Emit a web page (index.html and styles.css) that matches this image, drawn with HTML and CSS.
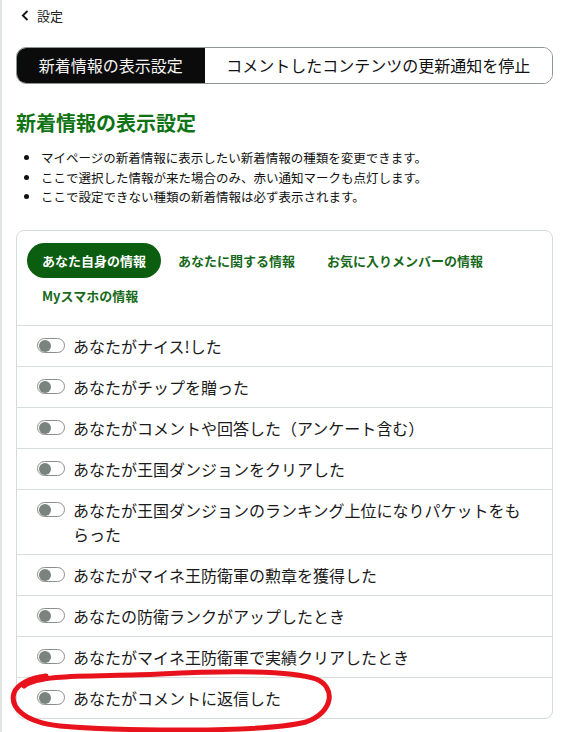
FILE: index.html
```html
<!DOCTYPE html>
<html lang="ja">
<head>
<meta charset="utf-8">
<title>新着情報の表示設定</title>
<link rel="stylesheet" href="styles.css">
</head>
<body>
<div class="page">
  <header class="back">
    <svg class="chev" width="8" height="11" viewBox="0 0 8 11"><polyline points="6.5,1 1.8,5.5 6.5,10" fill="none" stroke="#111" stroke-width="1.8"/></svg>
    <span>設定</span>
  </header>

  <div class="segment">
    <div class="seg seg-active">新着情報の表示設定</div>
    <div class="seg">コメントしたコンテンツの更新通知を停止</div>
  </div>

  <h1 class="title">新着情報の表示設定</h1>
  <ul class="notes">
    <li>マイページの新着情報に表示したい新着情報の種類を変更できます。</li>
    <li>ここで選択した情報が来た場合のみ、赤い通知マークも点灯します。</li>
    <li>ここで設定できない種類の新着情報は必ず表示されます。</li>
  </ul>

  <div class="card">
    <div class="tabs">
      <span class="tab tab-active">あなた自身の情報</span>
      <span class="tab">あなたに関する情報</span>
      <span class="tab">お気に入りメンバーの情報</span>
      <span class="tab">Myスマホの情報</span>
    </div>
    <div class="row"><span class="toggle"><span class="knob"></span></span><span class="label">あなたがナイス!した</span></div>
    <div class="row"><span class="toggle"><span class="knob"></span></span><span class="label">あなたがチップを贈った</span></div>
    <div class="row"><span class="toggle"><span class="knob"></span></span><span class="label">あなたがコメントや回答した（アンケート含む）</span></div>
    <div class="row"><span class="toggle"><span class="knob"></span></span><span class="label">あなたが王国ダンジョンをクリアした</span></div>
    <div class="row"><span class="toggle"><span class="knob"></span></span><span class="label">あなたが王国ダンジョンのランキング上位になりパケットをもらった</span></div>
    <div class="row"><span class="toggle"><span class="knob"></span></span><span class="label">あなたがマイネ王防衛軍の勲章を獲得した</span></div>
    <div class="row"><span class="toggle"><span class="knob"></span></span><span class="label">あなたの防衛ランクがアップしたとき</span></div>
    <div class="row"><span class="toggle"><span class="knob"></span></span><span class="label">あなたがマイネ王防衛軍で実績クリアしたとき</span></div>
    <div class="row"><span class="toggle"><span class="knob"></span></span><span class="label">あなたがコメントに返信した</span></div>
  </div>

  <svg class="annot" width="566" height="732" viewBox="0 0 566 732">
    <path d="M 24 686 C 40 673, 100 677, 160 674 S 290 670, 316 679 C 336 687, 334 712, 306 722 C 262 733, 120 731, 60 726 C 22 722, 10 706, 14 693 C 17 684, 30 678, 46 676" fill="none" stroke="#e8121c" stroke-width="5" stroke-linecap="round" stroke-linejoin="round"/>
  </svg>
</div>
</body>
</html>
```

FILE: styles.css
```css
html, body {
  margin: 0;
  padding: 0;
  background: #ffffff;
}

body {
  font-family: "Noto Sans CJK JP", "Noto Sans", sans-serif;
  color: #1a1a1a;
}

.page {
  position: relative;
  min-height: 732px;
  border-left: 2px solid #dfe4e4;
  padding: 0 13px 0 14px;
  box-sizing: border-box;
  overflow: hidden;
}

.back {
  display: flex;
  align-items: center;
  gap: 8px;
  padding: 6px 0 0 5px;
  height: 19px;
  line-height: 19px;
  font-size: 13px;
  color: #222;
}

.chev {
  display: block;
}

.segment {
  display: flex;
  margin-top: 22px;
  border: 1px solid #8f9494;
  border-radius: 10px;
  overflow: hidden;
  height: 35px;
}

.seg {
  flex: 1 1 auto;
  text-align: center;
  line-height: 35px;
  font-size: 16px;
  color: #111;
  white-space: nowrap;
  background: #fff;
}

.seg-active {
  background: #0b0b0b;
  color: #f4f4f4;
}

.title {
  margin: 25px 0 0;
  font-size: 20px;
  line-height: 28px;
  font-weight: 700;
  color: #107314;
}

.notes {
  margin: 11px 0 0;
  padding-left: 25px;
  font-size: 12.5px;
  line-height: 19.5px;
  color: #111;
}

.card {
  margin-top: 23px;
  border: 1px solid #d5dada;
  border-radius: 8px;
}

.tabs {
  display: flex;
  flex-wrap: wrap;
  column-gap: 2px;
  padding: 12px 10px;
}

.tab {
  padding: 9px 15px;
  font-size: 13px;
  line-height: 17px;
  font-weight: 700;
  color: #17691a;
  border-radius: 18px;
  white-space: nowrap;
}

.tab-active {
  background: #0b5d0f;
  color: #ffffff;
}

.row {
  display: flex;
  align-items: flex-start;
  gap: 8px;
  border-top: 1px solid #d8dddd;
  padding: 8px 20px 8px 20px;
}

.toggle {
  flex: none;
  box-sizing: border-box;
  width: 28px;
  height: 15px;
  margin-top: 4.5px;
  border: 1px solid #8a8f8c;
  border-radius: 8px;
  background: #fff;
  display: flex;
  align-items: center;
  padding-left: 1px;
}

.knob {
  width: 12px;
  height: 12px;
  border-radius: 50%;
  background: #7b837e;
}

.label {
  font-size: 16px;
  line-height: 24px;
  color: #1a1a1a;
}

.annot {
  position: absolute;
  left: -2px;
  top: 0;
  pointer-events: none;
}
```
